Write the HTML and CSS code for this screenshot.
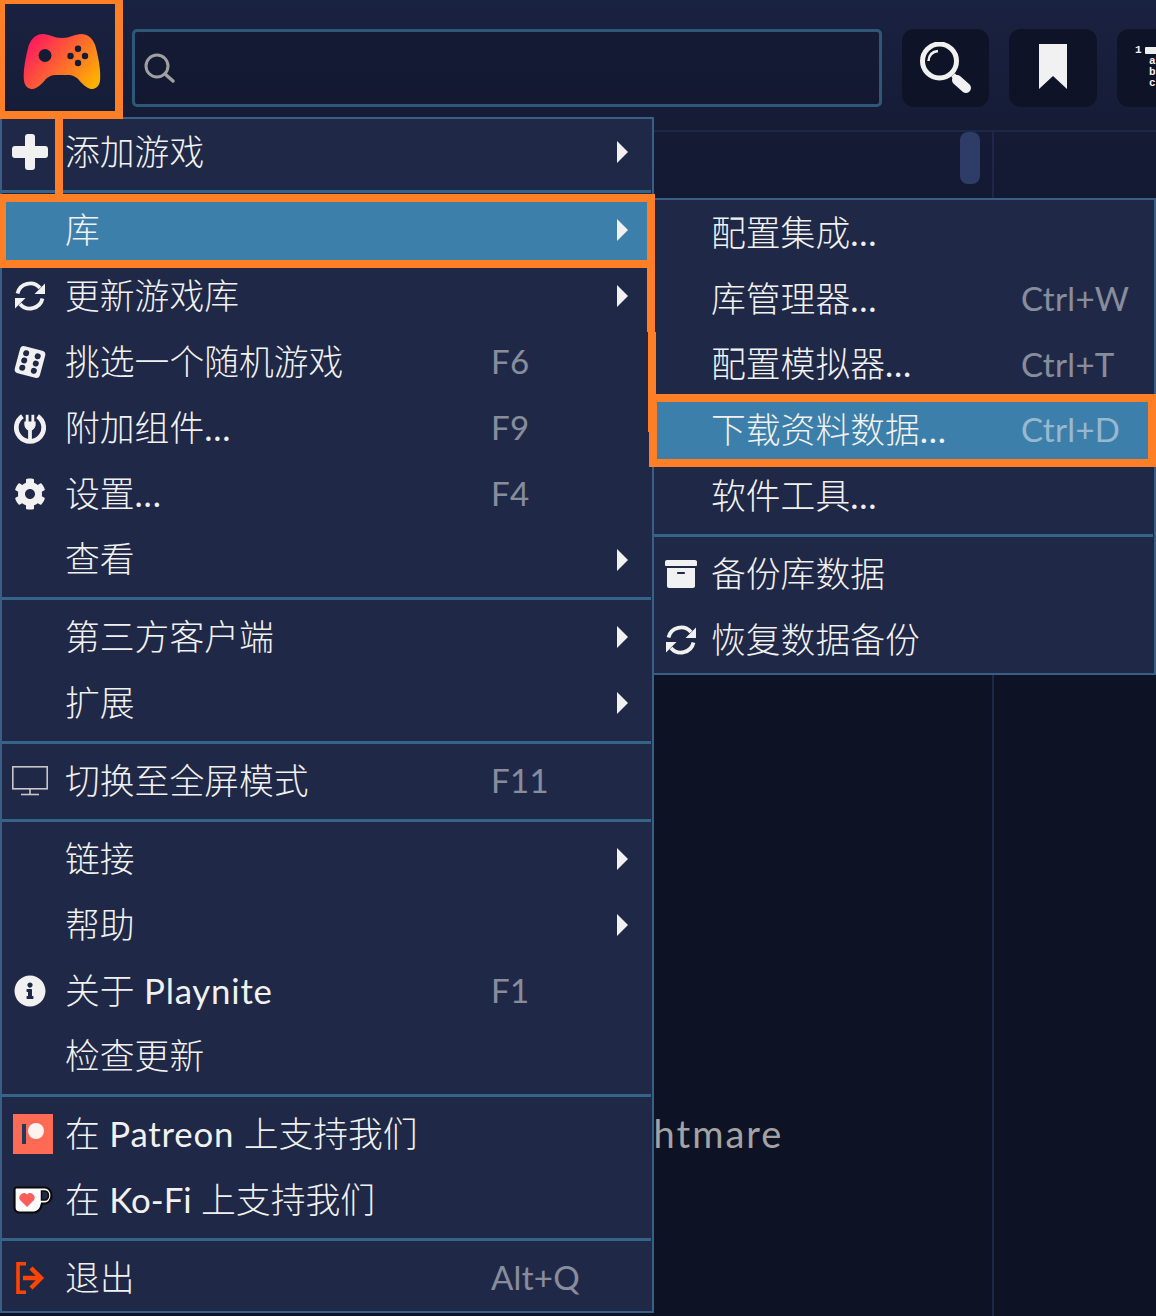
FILE: index.html
```html
<!DOCTYPE html>
<html lang="zh-CN">
<head>
  <meta charset="UTF-8" />
  <title>Playnite</title>
  <link rel="stylesheet" href="styles.css">
</head>
<body>

<header class="topbar">
  <div class="logo">
    <svg width="78" height="56" viewBox="0 0 78 56">
      <defs>
        <linearGradient id="padfill" x1="0" y1="0.2" x2="1" y2="0.8">
          <stop offset="0" stop-color="#ff1560" />
          <stop offset="1" stop-color="#ffb300" />
        </linearGradient>
      </defs>
      <path fill="url(#padfill)" d="M20 0C26 0 31 4 39 4C47 4 52 0 58 0C66 0 71 6 73 14C76 26 78 38 77 47C76 53 72 55 69 55C63 55 58 48 54 44C51 42 49 41 46 41L32 41C29 41 27 42 24 44C20 48 15 55 9 55C6 55 2 53 1 47C0 38 2 26 5 14C7 6 12 0 20 0Z" />
      <g fill="#151b34">
        <circle cx="22" cy="21.5" r="6.5" />
        <circle cx="55" cy="14.7" r="3.2" />
        <circle cx="47.5" cy="22" r="3.2" />
        <circle cx="62" cy="22" r="3.2" />
        <circle cx="55" cy="29" r="3.2" />
      </g>
    </svg>
  </div>
  <div class="search">
    <svg width="34" height="34" viewBox="0 0 34 34" fill="none" stroke="#a0a0a0">
      <circle cx="15" cy="15" r="11" stroke-width="3" />
      <line x1="23" y1="23" x2="31" y2="30" stroke-width="3.5" stroke-linecap="round" />
    </svg>
  </div>
  <div class="toolbtn">
    <svg width="52" height="52" viewBox="0 0 52 52" fill="none" stroke="#f1f1f1">
      <circle cx="19.5" cy="19" r="17" stroke-width="5" />
      <path d="M8.5 19Q9 10 18 9" stroke-width="2.5" />
      <line x1="33" y1="33" x2="38" y2="38" stroke-width="5" />
      <line x1="37" y1="38" x2="46" y2="46" stroke-width="10" stroke-linecap="round" />
    </svg>
  </div>
  <div class="toolbtn">
    <svg class="bookmark" width="28" height="45" viewBox="0 0 28 45">
      <polygon fill="#f1f1f1" points="0,0 28,0 28,45 14,32 0,45" />
    </svg>
  </div>
  <div class="toolbtn sortbtn">
    <div class="sortrow"><span>1</span><i class="sortbar"></i></div>
    <div class="sortletter">a</div>
    <div class="sortletter">b</div>
    <div class="sortletter">c</div>
  </div>
</header>

<main class="content">
  <section class="library">
    <p class="game">Nightmare</p>
    <div class="thumb"></div>
  </section>
  <section class="details"></section>
</main>

<nav class="menu mainmenu">
  <div class="item">
    <span class="ico"><svg width="36" height="36" viewBox="0 0 36 36"><path d="M16 0h4a3 3 0 0 1 3 3v9h10a3 3 0 0 1 3 3v6a3 3 0 0 1-3 3H23v9a3 3 0 0 1-3 3h-4a3 3 0 0 1-3-3v-9H3a3 3 0 0 1-3-3v-6a3 3 0 0 1 3-3h10V3a3 3 0 0 1 3-3z" /></svg></span>
    <span class="label">添加游戏</span><span class="keys"></span><i class="arrow"></i>
  </div>
  <div class="sep"></div>
  <div class="item active">
    <span class="ico"></span>
    <span class="label">库</span><span class="keys"></span><i class="arrow"></i>
  </div>
  <div class="item">
    <span class="ico"><svg width="32" height="32" viewBox="0 0 32 32"><path d="M3.500 13.500A13 13 0 0 1 26 8M28.500 18.500A13 13 0 0 1 6 24" fill="none" stroke="#f1f1f1" stroke-width="3.800" /><path d="M31 3.500V14H20.500zM1 28.500V18H11.500z" /></svg></span>
    <span class="label">更新游戏库</span><span class="keys"></span><i class="arrow"></i>
  </div>
  <div class="item">
    <span class="ico"><svg width="34" height="34" viewBox="0 0 34 34"><g transform="rotate(15 17 17)"><rect x="4" y="3" width="26" height="28" rx="4" /><g fill="#1f2847"><circle cx="11" cy="9.5" r="3" /><circle cx="23" cy="9.5" r="3" /><circle cx="11" cy="17" r="3" /><circle cx="23" cy="17" r="3" /><circle cx="11" cy="24.5" r="3" /><circle cx="23" cy="24.5" r="3" /></g></g></svg></span>
    <span class="label">挑选一个随机游戏</span><span class="keys">F6</span><i class="noarrow"></i>
  </div>
  <div class="item">
    <span class="ico"><svg width="34" height="34" viewBox="0 0 36 36"><path d="M10 5.500A14.500 14.500 0 1 0 26 5.500" fill="none" stroke="#f1f1f1" stroke-width="5" /><rect x="13.500" y="4" width="3" height="8" /><rect x="19.500" y="4" width="3" height="8" /><path d="M12 11h12v3c0 4-3 6-4 6.500V30h-4v-9.500c-1-.5-4-2.500-4-6.500z" /></svg></span>
    <span class="label">附加组件<span class="latin">...</span></span><span class="keys">F9</span><i class="noarrow"></i>
  </div>
  <div class="item">
    <span class="ico"><svg width="32" height="32" viewBox="0 0 512 512"><path d="M487.4 315.7l-42.6-24.6c4.3-23.2 4.3-47 0-70.2l42.6-24.6c4.9-2.8 7.1-8.6 5.5-14-11.1-35.6-30-67.8-54.7-94.6-3.8-4.1-10-5.1-14.8-2.3L380.8 110c-17.9-15.4-38.5-27.3-60.8-35.1V25.8c0-5.6-3.9-10.5-9.4-11.7-36.7-8.2-74.3-7.8-109.2 0-5.5 1.2-9.4 6.1-9.4 11.7V75c-22.2 7.9-42.8 19.8-60.8 35.1L88.7 85.5c-4.9-2.8-11-1.9-14.8 2.3-24.7 26.7-43.6 58.9-54.7 94.6-1.7 5.4.6 11.2 5.5 14L67.3 221c-4.3 23.2-4.3 47 0 70.2l-42.6 24.6c-4.9 2.8-7.1 8.6-5.5 14 11.1 35.6 30 67.8 54.7 94.6 3.8 4.1 10 5.1 14.8 2.3l42.6-24.6c17.9 15.4 38.5 27.3 60.8 35.1v49.2c0 5.6 3.9 10.5 9.4 11.7 36.7 8.2 74.3 7.8 109.2 0 5.5-1.2 9.4-6.1 9.4-11.7v-49.2c22.2-7.9 42.8-19.8 60.8-35.1l42.6 24.6c4.9 2.8 11 1.9 14.8-2.3 24.7-26.7 43.6-58.9 54.7-94.6 1.5-5.5-.7-11.3-5.6-14.1zM256 336c-44.1 0-80-35.9-80-80s35.900-80 80-80 80 35.900 80 80-35.900 80-80 80z" /></svg></span>
    <span class="label">设置<span class="latin">...</span></span><span class="keys">F4</span><i class="noarrow"></i>
  </div>
  <div class="item short">
    <span class="ico"></span>
    <span class="label">查看</span><span class="keys"></span><i class="arrow"></i>
  </div>
  <div class="sep"></div>
  <div class="item">
    <span class="ico"></span>
    <span class="label">第三方客户端</span><span class="keys"></span><i class="arrow"></i>
  </div>
  <div class="item">
    <span class="ico"></span>
    <span class="label">扩展</span><span class="keys"></span><i class="arrow"></i>
  </div>
  <div class="sep"></div>
  <div class="item">
    <span class="ico"><svg width="36" height="30" viewBox="0 0 36 30" fill="none" stroke="#c8c8cc" stroke-width="1.600"><rect x="0.800" y="0.800" width="34.400" height="22" /><line x1="18" y1="23" x2="18" y2="28" /><line x1="9" y1="28.500" x2="27" y2="28.500" /></svg></span>
    <span class="label">切换至全屏模式</span><span class="keys">F11</span><i class="noarrow"></i>
  </div>
  <div class="sep"></div>
  <div class="item">
    <span class="ico"></span>
    <span class="label">链接</span><span class="keys"></span><i class="arrow"></i>
  </div>
  <div class="item">
    <span class="ico"></span>
    <span class="label">帮助</span><span class="keys"></span><i class="arrow"></i>
  </div>
  <div class="item">
    <span class="ico"><svg width="32" height="32" viewBox="0 0 512 512"><path d="M256 8C119.043 8 8 119.083 8 256c0 136.997 111.043 248 248 248s248-111.003 248-248C504 119.083 392.957 8 256 8zm0 110c23.196 0 42 18.804 42 42s-18.804 42-42 42-42-18.804-42-42 18.804-42 42-42zm56 254c0 6.627-5.373 12-12 12h-88c-6.627 0-12-5.373-12-12v-24c0-6.627 5.373-12 12-12h12v-64h-12c-6.627 0-12-5.373-12-12v-24c0-6.627 5.373-12 12-12h64c6.627 0 12 5.373 12 12v100h12c6.627 0 12 5.373 12 12v24z" /></svg></span>
    <span class="label">关于 <span class="latin">Playnite</span></span><span class="keys">F1</span><i class="noarrow"></i>
  </div>
  <div class="item short">
    <span class="ico"></span>
    <span class="label">检查更新</span><span class="keys"></span><i class="noarrow"></i>
  </div>
  <div class="sep"></div>
  <div class="item">
    <span class="ico"><svg class="shift" width="40" height="40" viewBox="0 0 40 40"><rect width="40" height="40" fill="#ff6a55" /><circle cx="23" cy="17" r="8" fill="#fdf3ef" /><rect x="9" y="10" width="4" height="20" fill="#1f3a5c" /></svg></span>
    <span class="label">在 <span class="latin">Patreon</span> 上支持我们</span><span class="keys"></span><i class="noarrow"></i>
  </div>
  <div class="item">
    <span class="ico"><svg class="shift" width="40" height="28" viewBox="0 0 40 28"><path d="M1.500 3.500a2 2 0 0 1 2-2H32a6.500 8 0 0 1 0 16H29c-1 5-4 9-8 9H7c-3 0-5.500-2-5.500-5z" fill="#fff" stroke="#0a0a0a" stroke-width="2.200" /><path d="M28.500 5H32a3.500 4.500 0 0 1 0 9h-3.500z" fill="#1f2847" stroke="#0a0a0a" stroke-width="1.500" /><path d="M14 21L7 14a4.500 4.500 0 0 1 7-5.500 4.500 4.500 0 0 1 7 5.500z" fill="#ff5e5b" /></svg></span>
    <span class="label">在 <span class="latin tight">Ko-Fi</span> 上支持我们</span><span class="keys"></span><i class="noarrow"></i>
  </div>
  <div class="sep"></div>
  <div class="item">
    <span class="ico"><svg width="30" height="32" viewBox="0 0 30 32" fill="none" stroke="#ff4400"><path d="M11 1.800H3v28.400h8" stroke-width="3.600" /><path d="M8 16h16" stroke-width="4.500" /><path d="M16 6l10 10-10 10" stroke-width="4.500" /></svg></span>
    <span class="label">退出</span><span class="keys">Alt+Q</span><i class="noarrow"></i>
  </div>
</nav>

<nav class="menu submenu">
  <div class="item">
    <span class="ico"></span>
    <span class="label">配置集成<span class="latin">...</span></span><span class="keys"></span>
  </div>
  <div class="item">
    <span class="ico"></span>
    <span class="label">库管理器<span class="latin">...</span></span><span class="keys">Ctrl+W</span>
  </div>
  <div class="item short">
    <span class="ico"></span>
    <span class="label">配置模拟器<span class="latin">...</span></span><span class="keys">Ctrl+T</span>
  </div>
  <div class="item active">
    <span class="ico"></span>
    <span class="label">下载资料数据<span class="latin">...</span></span><span class="keys">Ctrl+D</span>
  </div>
  <div class="item">
    <span class="ico"></span>
    <span class="label">软件工具<span class="latin">...</span></span><span class="keys"></span>
  </div>
  <div class="sep"></div>
  <div class="item">
    <span class="ico"><svg width="32" height="32" viewBox="0 0 512 512"><path d="M32 448c0 17.700 14.300 32 32 32h384c17.700 0 32-14.300 32-32V160H32v288zm160-212c0-6.600 5.400-12 12-12h104c6.600 0 12 5.400 12 12v8c0 6.600-5.400 12-12 12H204c-6.600 0-12-5.400-12-12v-8zM480 32H32C14.300 32 0 46.300 0 64v48c0 8.800 7.200 16 16 16h480c8.800 0 16-7.200 16-16V64c0-17.700-14.300-32-32-32z" /></svg></span>
    <span class="label">备份库数据</span><span class="keys"></span>
  </div>
  <div class="item">
    <span class="ico"><svg width="32" height="32" viewBox="0 0 32 32"><path d="M3.500 13.500A13 13 0 0 1 26 8M28.500 18.500A13 13 0 0 1 6 24" fill="none" stroke="#f1f1f1" stroke-width="3.800" /><path d="M31 3.500V14H20.500zM1 28.500V18H11.500z" /></svg></span>
    <span class="label">恢复数据备份</span><span class="keys"></span>
  </div>
</nav>

<!-- orange annotation marks drawn over the app -->
<div class="mark mark-logo"></div>
<div class="mark mark-plus"></div>
<div class="mark mark-library"></div>
<div class="mark mark-link1"></div>
<div class="mark mark-link2"></div>
<div class="mark mark-download"></div>

</body>
</html>
```

FILE: styles.css
```css
html, body {
  margin: 0;
  padding: 0;
  height: 100%;
}
body {
  position: relative;
  width: 1156px;
  height: 1316px;
  overflow: hidden;
  display: flex;
  flex-direction: column;
  font-family: "Lato", "Noto Sans CJK SC", sans-serif;
  color: #f1f1f1;
  background: linear-gradient(to bottom, #1a2241 0, #141a33 160px, #0d1224 680px);
}

/* top bar */
.topbar {
  height: 130px;
  flex-shrink: 0;
  display: flex;
  align-items: flex-start;
  border-bottom: 2px solid #1e2748;
  overflow: hidden;
}
.logo {
  width: 132px;
  height: 118px;
  flex-shrink: 0;
  display: flex;
  align-items: center;
  justify-content: center;
  padding-right: 9px;
  padding-top: 6px;
  box-sizing: border-box;
}
.search {
  width: 750px;
  height: 78px;
  margin-top: 29px;
  flex-shrink: 0;
  box-sizing: border-box;
  border: 3px solid #2f5878;
  border-radius: 5px;
  background: rgba(13, 18, 36, 0.35);
  display: flex;
  align-items: center;
  padding-left: 7px;
}
.toolbtn {
  width: 87.5px;
  height: 78px;
  margin-top: 29px;
  margin-left: 19.75px;
  flex-shrink: 0;
  background: #0f1327;
  border-radius: 12px;
  display: flex;
  align-items: center;
  justify-content: center;
}
.bookmark {
  margin-bottom: 3px;
}
.sortbtn {
  display: block;
  margin-left: 20.5px;
  box-sizing: border-box;
  padding: 16px 0 0 18px;
  font: bold 11px/11px "Liberation Mono", monospace;
}
.sortrow {
  display: flex;
  align-items: center;
  gap: 3px;
}
.sortbar {
  display: block;
  width: 30px;
  height: 7px;
  background: #f1f1f1;
  border-radius: 1px;
}
.sortletter {
  padding-left: 14px;
}

/* stuff behind the menus */
.content {
  flex: 1;
  display: flex;
}
.library {
  position: relative;
  box-sizing: border-box;
  border-right: 2px solid #1e2748;
  width: 994px;
}
.game {
  margin: 981px 0 0 590px;
  font-size: 38px;
  letter-spacing: 2px;
  line-height: 40px;
  color: #a3a3a3;
}
.thumb {
  position: absolute;
  top: 0;
  left: 960px;
  width: 20px;
  height: 52px;
  border-radius: 8px;
  background: #2e3c68;
}
.details {
  flex: 1;
}

/* menus */
.menu {
  position: absolute;
  box-sizing: border-box;
  background: #1f2847;
  border: 2px solid #3a5f86;
  font-size: 34.8px;
  display: flex;
  flex-direction: column;
}
.mainmenu {
  left: 0;
  top: 117px;
  width: 654px;
  height: 1196px;
}
.submenu {
  left: 652px;
  top: 198px;
  width: 504px;
  height: 477px;
}
.item {
  height: 66px;
  flex-shrink: 0;
  display: flex;
  align-items: center;
  white-space: nowrap;
}
.item.short {
  height: 65px;
}
.item.active {
  background: #3d7fab;
}
.ico {
  width: 56px;
  margin-right: 7px;
  flex-shrink: 0;
  display: flex;
  align-items: center;
  justify-content: center;
  fill: #f1f1f1;
}
.ico svg {
  display: block;
}
.ico .shift {
  margin-left: 6px;
}
.label {
  width: 426px;
  flex-shrink: 0;
  padding-bottom: 5px;
  font-weight: 300;
}
.latin {
  font-weight: 400;
  letter-spacing: 0.8px;
}
.latin.tight {
  letter-spacing: 0;
}
.keys {
  width: 126px;
  flex-shrink: 0;
  padding-bottom: 2px;
  font-size: 33px;
  letter-spacing: 0.3px;
  opacity: 0.5;
}
.arrow {
  width: 0;
  height: 0;
  border-left: 11px solid #f1f1f1;
  border-top: 11px solid transparent;
  border-bottom: 11px solid transparent;
}
.sep {
  height: 3px;
  margin: 5px 1px 4px 0;
  flex-shrink: 0;
  background: #356488;
}
.submenu .ico {
  width: 54px;
  margin-right: 3px;
}
.submenu .label {
  width: 310px;
}

/* annotations */
.mark {
  position: absolute;
  background: #ff7f27;
}
.mark-logo {
  left: 0;
  top: 0;
  width: 123px;
  height: 119px;
  box-sizing: border-box;
  background: none;
  border: solid #ff7f27;
  border-width: 4px 8px 8px 5px;
}
.mark-plus {
  left: 55px;
  top: 119px;
  width: 8px;
  height: 76px;
}
.mark-library {
  left: 0;
  top: 194px;
  width: 655px;
  height: 74px;
  box-sizing: border-box;
  background: none;
  border: solid #ff7f27;
  border-width: 8px 8px 8px 6px;
}
.mark-link1 {
  left: 647px;
  top: 268px;
  width: 8px;
  height: 64px;
}
.mark-link2 {
  left: 648px;
  top: 332px;
  width: 8px;
  height: 100px;
}
.mark-download {
  left: 649px;
  top: 394px;
  width: 507px;
  height: 73px;
  box-sizing: border-box;
  background: none;
  border: 8px solid #ff7f27;
}
```
